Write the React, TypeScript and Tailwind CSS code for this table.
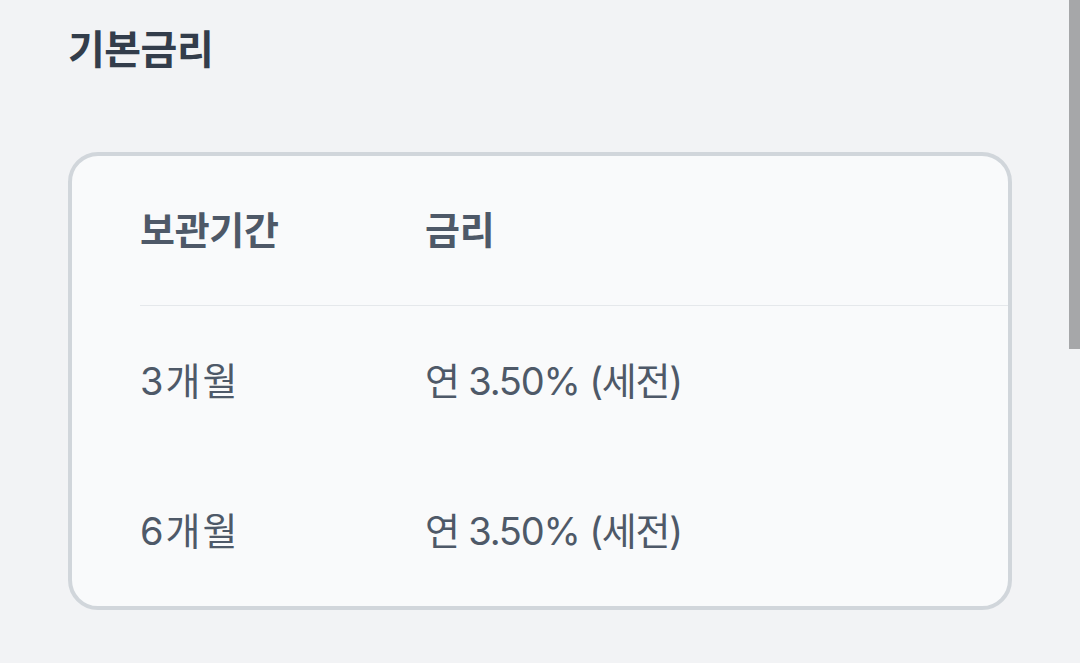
export default function App() {
  const rows = [
    { term: "3개월", rate: "연 3.50% (세전)" },
    { term: "6개월", rate: "연 3.50% (세전)" },
  ];
  return (
    <div className="relative h-[663px] w-[1080px] overflow-hidden bg-[#f2f3f5] font-['Inter','Noto_Sans_CJK_KR',sans-serif]">
      <div className="px-[68px] pt-[22px]">
        <h2 className="h-[56px] text-[40px] font-bold leading-[56px] tracking-[-0.5px] text-[#333d4b]">기본금리</h2>
        <div className="mt-[74px] w-[944px] overflow-hidden rounded-[30px] border-4 border-[#d1d6db] bg-[#f9fafb] pl-[68px]">
          <div className="flex h-[150px] items-center border-b border-[#e5e8eb] text-[38px] font-bold tracking-[-0.3px] text-[#4e5968]">
            <div className="w-[285px]">보관기간</div>
            <div>금리</div>
          </div>
          {rows.map((r, i) => (
            <div key={i} className="flex h-[150px] items-center text-[38px] text-[#4e5968]">
              <div className="w-[285px] tracking-[2px]">{r.term}</div>
              <div className="tracking-[-1.2px]">{r.rate}</div>
            </div>
          ))}
        </div>
      </div>
      <div className="absolute right-0 top-0 h-[349px] w-[11px] bg-[#a6a7a9]" />
    </div>
  );
}
